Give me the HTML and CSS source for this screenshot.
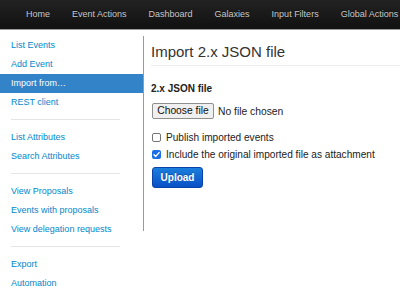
FILE: index.html
```html
<!DOCTYPE html>
<html>
<head>
<meta charset="utf-8">
<link rel="stylesheet" href="styles.css">
</head>
<body>
<div class="navbar">
  <a class="nav-item">Home</a>
  <a class="nav-item">Event Actions</a>
  <a class="nav-item">Dashboard</a>
  <a class="nav-item">Galaxies</a>
  <a class="nav-item">Input Filters</a>
  <a class="nav-item">Global Actions</a>
</div>
<div class="page">
  <ul class="sidebar">
    <li class="side-item"><a>List Events</a></li>
    <li class="side-item"><a>Add Event</a></li>
    <li class="side-item active"><a>Import from…</a></li>
    <li class="side-item"><a>REST client</a></li>
    <li class="divider"></li>
    <li class="side-item"><a>List Attributes</a></li>
    <li class="side-item"><a>Search Attributes</a></li>
    <li class="divider"></li>
    <li class="side-item"><a>View Proposals</a></li>
    <li class="side-item"><a>Events with proposals</a></li>
    <li class="side-item"><a>View delegation requests</a></li>
    <li class="divider"></li>
    <li class="side-item"><a>Export</a></li>
    <li class="side-item"><a>Automation</a></li>
  </ul>
  <div class="content">
    <h2 class="title">Import 2.x JSON file</h2>
    <div class="field-label">2.x JSON file</div>
    <div class="file-row">
      <span class="file-btn">Choose file</span>
      <span class="file-text">No file chosen</span>
    </div>
    <div class="check-row">
      <span class="check"></span>
      <span class="check-label">Publish imported events</span>
    </div>
    <div class="check-row">
      <span class="check checked"><svg viewBox="0 0 10 10" width="9" height="9"><path d="M2.2 5.2 L4.2 7.1 L7.9 2.9" fill="none" stroke="#fff" stroke-width="1.6" stroke-linecap="round" stroke-linejoin="round"/></svg></span>
      <span class="check-label">Include the original imported file as attachment</span>
    </div>
    <div class="actions">
      <span class="btn-primary">Upload</span>
    </div>
  </div>
</div>
</body>
</html>
```
FILE: styles.css
```css
html, body {
  margin: 0;
  padding: 0;
  background: #fff;
  font-family: "Liberation Sans", Arial, sans-serif;
  overflow: hidden;
}
.navbar {
  height: 29px;
  background: linear-gradient(#222222, #111111);
  border-bottom: 1px solid #9c9c9c;
  display: flex;
  padding-left: 15px;
  white-space: nowrap;
  overflow: hidden;
}
.nav-item {
  display: block;
  padding: 0 11px;
  line-height: 29px;
  font-size: 9px;
  color: #c8c8c8;
  text-shadow: 0 -1px 0 rgba(0,0,0,0.4);
  flex: none;
}
.page {
  display: flex;
  align-items: flex-start;
  padding-top: 6px;
}
.sidebar {
  list-style: none;
  margin: 0;
  padding: 0;
  width: 143px;
  flex: none;
}
.side-item a {
  display: block;
  height: 19px;
  line-height: 19px;
  padding-left: 11px;
  font-size: 9px;
  color: #0088cc;
  white-space: nowrap;
}
.side-item.active a {
  background: #3283c8;
  color: #fff;
}
.divider {
  height: 1px;
  background: #e5e5e5;
  margin: 7px 23px 8px 11px;
}
.content {
  flex: 1;
  border-left: 1px solid #9a9a9a;
  height: 195px;
  padding-left: 7px;
}
.title {
  margin: 6px 0 0;
  font-size: 15px;
  font-weight: normal;
  line-height: 20px;
  color: #333;
  padding-bottom: 3px;
  border-bottom: 1px solid #eeeeee;
}
.field-label {
  margin-top: 16px;
  font-size: 10px;
  font-weight: bold;
  line-height: 14px;
  color: #222;
}
.file-row {
  margin-top: 7px;
  display: flex;
  align-items: center;
  height: 16px;
  margin-left: 1px;
}
.file-btn {
  box-sizing: border-box;
  height: 16px;
  width: 62px;
  border: 1px solid #8f8f8f;
  border-radius: 2px;
  background: #efefef;
  font-size: 10.3px;
  line-height: 14px;
  text-align: center;
  color: #111;
}
.file-text {
  margin-left: 4px;
  font-size: 10.3px;
  color: #222;
}
.check-row {
  display: flex;
  align-items: center;
  height: 17px;
  margin-left: 1px;
}
.file-row + .check-row {
  margin-top: 10px;
}
.check {
  box-sizing: border-box;
  width: 9px;
  height: 9px;
  border: 1px solid #767676;
  border-radius: 2px;
  background: #fff;
  display: flex;
}
.check.checked {
  background: #1a6fe6;
  border: none;
}
.check-label {
  margin-left: 5px;
  font-size: 10.1px;
  color: #222;
}
.actions {
  margin-top: 4px;
  margin-left: 1px;
}
.btn-primary {
  display: inline-block;
  box-sizing: border-box;
  width: 51px;
  height: 21px;
  line-height: 19px;
  text-align: center;
  font-size: 10px;
  font-weight: bold;
  color: #fff;
  background: linear-gradient(#1a7fdc, #0a4fc6);
  border: 1px solid #0844a8;
  border-radius: 3px;
  text-shadow: 0 -1px 0 rgba(0,0,0,0.25);
}
```
